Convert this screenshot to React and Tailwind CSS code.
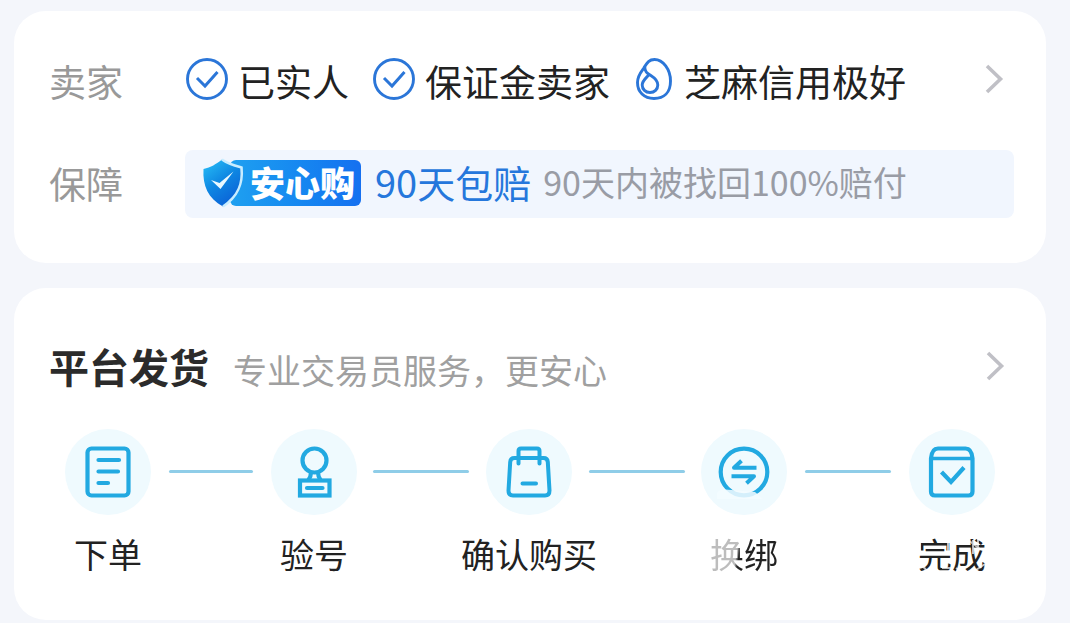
import React from 'react';

function CheckCircle() {
  return (
    <svg viewBox="0 0 42 42" className="size-[42px] shrink-0" fill="none" stroke="#2b76d8" aria-hidden="true">
      <circle cx="21" cy="21" r="19.5" strokeWidth="2.9" />
      <path d="M11 20 19 28 31.5 14" strokeWidth="3" />
    </svg>
  );
}

function CreditDrop() {
  return (
    <svg viewBox="0 0 36 42" className="h-[42px] w-9 shrink-0" fill="none" stroke="#2b76d8" strokeWidth="2.9" aria-hidden="true">
      <path d="M18.500 1.500C27 1.500 34.500 11.500 34.500 23S28 40.500 18 40.500 1.500 34 1.500 24.500C1.500 18 4.500 14.500 7.500 10.500 10.500 6 12 1.500 18.500 1.500Z" />
      <path d="M8.800 8.500C8.500 14 11.500 15.500 15.500 18 19.500 20.500 21.800 22.500 21.800 27 21.800 31.300 18.500 34.500 14 34.500S6.200 31.300 6.200 27C6.200 23 9 21 12.800 17" />
    </svg>
  );
}

function Chevron() {
  return (
    <svg viewBox="0 0 20 30" className="h-[30px] w-5" fill="none" stroke="#c0c0c6" strokeWidth="3.6" aria-hidden="true">
      <path d="M3 2 16.500 15 3 28" />
    </svg>
  );
}

function Shield() {
  return (
    <svg viewBox="0 0 46 50" className="absolute -top-0.5 left-0 h-[50px] w-[46px]" aria-hidden="true">
      <defs>
        <linearGradient id="shield" x1="0.1" y1="0" x2="0.7" y2="1">
          <stop offset="0" stopColor="#27bdf6" />
          <stop offset="0.5" stopColor="#0e86e2" />
          <stop offset="1" stopColor="#0a5fd6" />
        </linearGradient>
      </defs>
      <path d="M20 1.500C26 6 32 7.500 39.500 9.500 41 25 37 38 21 48.500 6 40 .5 28 1.500 11 9 9.500 14 6 20 1.500Z" fill="url(#shield)" />
      <path d="M20 1.500C26 6 32 7.500 39.500 9.500 41 25 37 38 21 48.500" fill="none" stroke="#c9edff" strokeWidth="2.600" />
      <path d="M9 22 17.500 25 31.500 13.500 18.500 31Z" fill="#e9f8ff" />
    </svg>
  );
}

const iconClass = 'size-[54px]';

function OrderIcon() {
  return (
    <svg viewBox="0 0 54 54" className={iconClass} fill="none" stroke="#22a9e1" strokeWidth="4.2" strokeLinecap="round" aria-hidden="true">
      <rect x="6.500" y="3.500" width="41" height="47" rx="4" />
      <path d="M17.500 15H38M17.500 26.500H37M17.500 38H27" />
    </svg>
  );
}

function StampIcon() {
  return (
    <svg viewBox="0 0 54 54" className={iconClass} fill="none" stroke="#22a9e1" strokeWidth="4.2" aria-hidden="true">
      <circle cx="27.500" cy="15.500" r="12" />
      <path d="M24 27.500C24 31 23.500 32 21.500 35M31 27.500C31 31 31.500 32 33.500 35" />
      <rect x="13" y="35.500" width="29.500" height="15" />
      <path d="M20 43H35.500" strokeLinecap="round" />
    </svg>
  );
}

function BagIcon() {
  return (
    <svg viewBox="0 0 54 54" className={iconClass} fill="none" stroke="#22a9e1" strokeWidth="4" strokeLinecap="round" strokeLinejoin="round" aria-hidden="true">
      <path d="M12.500 13H41.500Q45.500 13 45.800 17L47.500 45.500Q47.500 50.500 43 50.500H11Q6.500 50.500 6.500 45.500L8.200 17Q8.500 13 12.500 13Z" />
      <path d="M16.500 18.500V6Q16.500 3.500 19 3.500H35Q37.500 3.500 37.500 6V18.500M20.500 38.500H34" />
    </svg>
  );
}

function SwapIcon() {
  return (
    <svg viewBox="0 0 54 54" className={iconClass} fill="none" stroke="#22a9e1" strokeWidth="4" aria-hidden="true">
      <circle cx="27" cy="27" r="23.300" strokeWidth="4.2" />
      <path d="M39.500 22.700H17L24.500 15.700M14.500 31.300H37L29.500 38.300" strokeLinejoin="round" />
      <path d="M0 48Q2 44 8 44.500L27 46 38 47 46 54H0Z" fill="#f3fbff" fillOpacity=".85" stroke="none" />
    </svg>
  );
}

function DoneIcon() {
  return (
    <svg viewBox="0 0 54 54" className={iconClass} fill="none" stroke="#22a9e1" strokeWidth="4.2" strokeLinejoin="round" aria-hidden="true">
      <path d="M6 13.500V46.500Q6 50.500 10 50.500H43.500Q47.500 50.500 47.500 46.500V13.500C47 7 45 3.500 40.500 3.500H13C8.500 3.500 6.500 7 6 13.500Z" />
      <path d="M6 13.500H47.500" strokeWidth="3.600" />
      <path d="M16.500 27 26 37 39 22.500" strokeLinejoin="miter" />
    </svg>
  );
}

function FadeMarks() {
  return (
    <svg viewBox="0 0 68 48" className="absolute inset-0 h-full w-full" fill="none" stroke="#fff" strokeOpacity=".7" strokeWidth="2" aria-hidden="true">
      <path d="M2 12V21M30 10V21M8 17H28M3 34 9 41M24 38H34M55 10V24M50 10 62 19M60 8V20M58 40 67 34M38 38 44 42" />
    </svg>
  );
}

const steps = [
  { label: '下单', icon: <OrderIcon />, box: 'w-[86px]', line: 'flex-[84_1_0%] mx-[18px]' },
  { label: '验号', icon: <StampIcon />, box: 'w-[86px]', line: 'flex-[96_1_0%] ml-4 mr-2.5' },
  { label: '确认购买', icon: <BagIcon />, box: 'w-[100px]', line: 'flex-[96_1_0%] ml-2.5 mr-4' },
  {
    label: '换绑',
    icon: <SwapIcon />,
    box: 'w-[86px]',
    line: 'flex-[86_1_0%] mx-[18px]',
    tone: 'bg-[linear-gradient(100deg,#bdbdbd_40%,#222_44%)] bg-clip-text text-transparent',
  },
  { label: '完成', icon: <DoneIcon />, box: 'w-[86px]', marks: true },
];

export default function App() {
  return (
    <main className="flex min-h-screen flex-col gap-[25px] bg-[#f4f6fb] pt-[11px] pr-6 pb-[3px] pl-3.5 font-['Noto_Sans_CJK_SC',sans-serif] text-[#222]">
      <section className="flex flex-col gap-[43px] rounded-[32px] bg-white pt-10 pr-8 pb-[45px] pl-[35px]">
        <div className="flex h-14 items-center text-[37px] leading-[56px] whitespace-nowrap">
          <h2 className="w-[137px] shrink-0 pt-1 text-[#999]">卖家</h2>
          <ul className="flex flex-1 items-center gap-6">
            <li className="flex items-center gap-2.5"><CheckCircle /><span className="pt-1">已实人</span></li>
            <li className="flex items-center gap-2.5"><CheckCircle /><span className="pt-1">保证金卖家</span></li>
            <li className="flex items-center gap-3 pl-0.5"><CreditDrop /><span className="pt-1">芝麻信用极好</span></li>
          </ul>
          <button type="button" aria-label="卖家详情" className="mr-2.5 shrink-0"><Chevron /></button>
        </div>
        <div className="flex h-[68px] items-center whitespace-nowrap">
          <h2 className="w-[136px] shrink-0 text-[37px] text-[#999]">保障</h2>
          <div className="flex h-full flex-1 items-center rounded-lg bg-[#f1f6fe] pl-[17px]">
            <div className="relative mr-3.5 shrink-0 pb-0.5 pl-7">
              <div className="h-[46px] rounded-md bg-gradient-to-r from-[#1fa0f0] to-[#1670f0] pr-1.5 pl-5 text-[35px] leading-[44px] font-black text-white">安心购</div>
              <Shield />
            </div>
            <span className="mr-3 pb-1.5 text-[38px] text-[#2577dc]">90天包赔</span>
            <span className="pb-1.5 text-[34px] text-[#999ca5]">90天内被找回100%赔付</span>
          </div>
        </div>
      </section>

      <section className="rounded-[32px] bg-white pt-12 pb-[42px]">
        <div className="flex h-[60px] items-center pr-[41px] pl-[35px] whitespace-nowrap">
          <h2 className="text-[40px] font-bold text-[#2b2b2b]">平台发货</h2>
          <p className="ml-6 flex-1 pt-1.5 text-[34px] text-[#a0a0a0]">专业交易员服务，更安心</p>
          <button type="button" aria-label="平台发货详情" className="shrink-0"><Chevron /></button>
        </div>
        <ol className="mt-[33px] flex items-start px-[51px]">
          {steps.map((s, i) => (
            <React.Fragment key={s.label}>
              <li className={`flex shrink-0 flex-col items-center gap-[15px] ${s.box}`}>
                <span className="flex size-[86px] items-center justify-center rounded-full bg-[#effafe]">{s.icon}</span>
                <span className="relative text-[34px] leading-[48px] whitespace-nowrap">
                  <span className={s.tone}>{s.label}</span>
                  {s.marks && <FadeMarks />}
                </span>
              </li>
              {i < steps.length - 1 && (
                <li aria-hidden="true" className={`mt-[41px] h-[3px] rounded-full bg-[#8fcde8] ${s.line}`} />
              )}
            </React.Fragment>
          ))}
        </ol>
      </section>
    </main>
  );
}
